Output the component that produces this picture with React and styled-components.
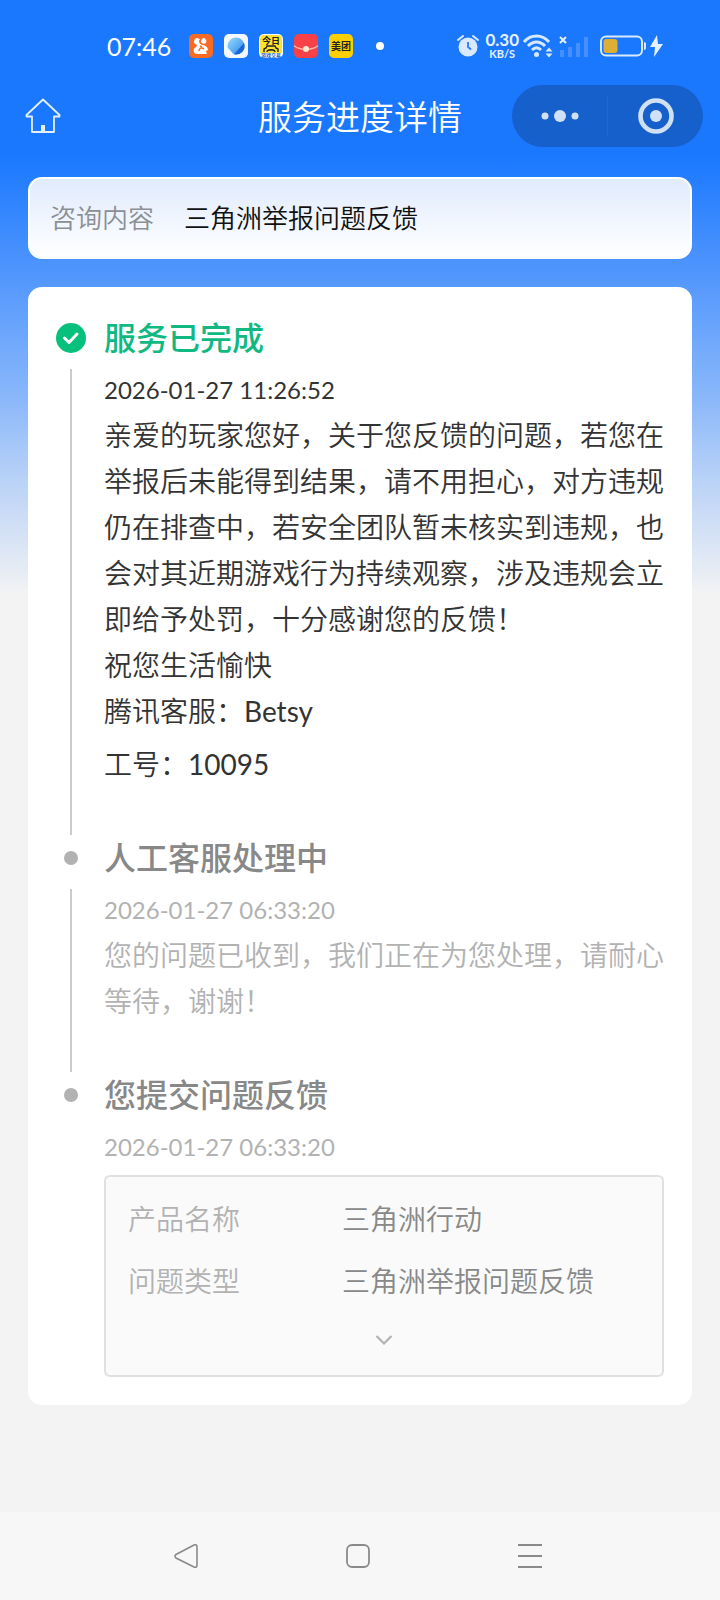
import { useState } from "react";
import styled, { createGlobalStyle } from "styled-components";

const steps = [
  {
    title: "服务已完成",
    time: "2026-01-27 11:26:52",
    done: true,
    lines: [
      "亲爱的玩家您好，关于您反馈的问题，若您在举报后未能得到结果，请不用担心，对方违规仍在排查中，若安全团队暂未核实到违规，也会对其近期游戏行为持续观察，涉及违规会立即给予处罚，十分感谢您的反馈！",
      "祝您生活愉快",
    ],
    agent: { name: "Betsy", id: "10095" },
  },
  {
    title: "人工客服处理中",
    time: "2026-01-27 06:33:20",
    lines: ["您的问题已收到，我们正在为您处理，请耐心等待，谢谢！"],
  },
  {
    title: "您提交问题反馈",
    time: "2026-01-27 06:33:20",
    lines: [],
    fields: [
      { label: "产品名称", value: "三角洲行动" },
      { label: "问题类型", value: "三角洲举报问题反馈" },
    ],
  },
];

function StatusBar() {
  return (
    <StatusWrapper>
      <Clock>07:46</Clock>
      <AppIcons>
        <svg width="24" height="24" viewBox="0 0 24 24">
          <rect width="24" height="24" rx="5" fill="#f96a22" />
          <path
            d="M5 8c0-2 1-4 3-4 1 0 1 1 3 1l-1 2c0 2 1 3 3 4 3 0 6 2 6 5l-2 1 1 3H8c-3 0-4-3-3-5 1-2 3-2 3-4-1-1-3-1-3-3z"
            fill="#fff"
          />
          <path d="M12 8c0-2 1-4 3-4 2 1 3 3 2 5-2 1-4 1-5-1z" fill="#fff" />
          <path d="M10 17c0-3 3-4 5-2M11 12l2 1" stroke="#f96a22" strokeWidth="1.5" fill="none" />
        </svg>
        <svg width="24" height="24" viewBox="0 0 24 24">
          <defs>
            <linearGradient id="drop" x1="0" y1="0" x2="1" y2="1">
              <stop offset="0" stopColor="#9adcfb" />
              <stop offset="1" stopColor="#2a86ee" />
            </linearGradient>
          </defs>
          <rect width="24" height="24" rx="5" fill="#f4f9ff" />
          <circle cx="12" cy="12" r="8.500" fill="url(#drop)" />
          <path d="M20 9L10 20.300A8.500 8.500 0 0 0 20 9z" fill="#1767d8" />
          <path d="M4 14l6 6.500-5 1z" fill="#f4f9ff" />
        </svg>
        <svg width="24" height="24" viewBox="0 0 24 24">
          <rect width="24" height="24" rx="5" fill="#fff" />
          <path d="M1 5a4 4 0 0 1 4-4h14a4 4 0 0 1 4 4v14H1z" fill="#ffe12f" />
          <IconText x="12" y="10" $size={9}>今日</IconText>
          <path
            d="M5 18v-3l2-1 1-2h8l1 2 2 1v3M8 18c0-3 8-3 8 0M10 16h4"
            fill="none"
            stroke="#222"
            strokeWidth="1.4"
          />
          <IconText x="12" y="23" $size={5} $color="#1566c8">游戏交易</IconText>
        </svg>
        <svg width="24" height="24" viewBox="0 0 24 24">
          <rect width="24" height="24" rx="5" fill="#fb4148" />
          <path d="M0 11c7 5 17 5 24 0v1.500c-7 5-17 5-24 0z" fill="#ffb7a5" />
          <circle cx="12" cy="15" r="3" fill="#ffe9cf" />
        </svg>
        <svg width="24" height="24" viewBox="0 0 24 24">
          <rect width="24" height="24" rx="5" fill="#fcd000" />
          <IconText x="12" y="16" $size={10}>美团</IconText>
        </svg>
      </AppIcons>
      <MoreDot />
      <SystemIcons>
        <svg width="24" height="24" viewBox="0 0 24 24" fill="none" stroke="#d9e9ff">
          <circle cx="11" cy="13" r="9.500" fill="#d9e9ff" stroke="none" />
          <path d="M1 6l5-4M21 6l-5-4" strokeWidth="2" strokeLinecap="round" />
          <path d="M11 8v5l3 2.500" stroke="#2a7cf5" strokeWidth="1.800" />
        </svg>
        <Speed>
          <SpeedValue>0.30</SpeedValue>
          <SpeedUnit>KB/S</SpeedUnit>
        </Speed>
        <svg width="32" height="24" viewBox="0 0 32 24" fill="none" stroke="#d9e9ff">
          <path d="M1 8c7-8 18-8 25 0" strokeWidth="3" />
          <path d="M5 12c5-5.500 12-5.500 17 0" strokeWidth="3" />
          <path d="M9 16c3-3 6-3 9 0" strokeWidth="3" />
          <circle cx="13.500" cy="20.500" r="2.500" fill="#d9e9ff" stroke="none" />
          <path d="M22.500 17.500h7L26 13.500zM22.500 19.500h7L26 23.500z" fill="#d9e9ff" stroke="none" />
        </svg>
        <svg width="37" height="24" viewBox="0 0 37 24">
          <path d="M1 3l6 6M7 3l-6 6" stroke="#e6f0ff" strokeWidth="2" />
          <path d="M1 16h4v7H1zM9 13h4v10H9zM17 9h4v14h-4zM25 3h4v20h-4z" fill="#4590fb" />
        </svg>
        <svg width="46" height="22" viewBox="0 0 46 22">
          <rect x="1" y="1.500" width="41" height="19" rx="5" fill="none" stroke="#d9e9ff" strokeWidth="2" />
          <rect x="3.500" y="4" width="14" height="14" rx="3" fill="#dfae35" />
          <path d="M44 7a2 2 0 0 1 2 2v4a2 2 0 0 1-2 2z" fill="#d9e9ff" />
        </svg>
        <svg width="13" height="22" viewBox="0 0 13 22">
          <path d="M7 0L0 12h5l-1 10L13 9H8z" fill="#e6f0ff" />
        </svg>
      </SystemIcons>
    </StatusWrapper>
  );
}

function NavBar() {
  return (
    <NavWrapper>
      <HomeButton aria-label="首页">
        <svg width="36" height="36" viewBox="0 0 36 36" fill="none" stroke="#e4efff" strokeWidth="1.800">
          <path d="M18 1.500L1.500 17v1.500H7V34h22V18.500h5.500V17z" strokeLinejoin="round" />
          <path d="M18 27v7" strokeWidth="4" />
        </svg>
      </HomeButton>
      <PageTitle>服务进度详情</PageTitle>
      <Capsule>
        <CapsuleButton aria-label="更多">
          <svg width="38" height="14" viewBox="0 0 38 14" fill="#d0e0f7">
            <circle cx="4" cy="7" r="3.500" />
            <circle cx="19" cy="7" r="6" />
            <circle cx="34" cy="7" r="3.500" />
          </svg>
        </CapsuleButton>
        <CapsuleButton aria-label="关闭">
          <svg width="36" height="36" viewBox="0 0 36 36">
            <circle cx="18" cy="18" r="15.500" fill="none" stroke="#d0e0f7" strokeWidth="4.600" />
            <circle cx="18" cy="18" r="6" fill="#d0e0f7" />
          </svg>
        </CapsuleButton>
      </Capsule>
    </NavWrapper>
  );
}

function FieldBox({ fields }) {
  const [open, setOpen] = useState(false);

  return (
    <FieldWrapper>
      <FieldList>
        {fields.map((field) => (
          <FieldRow key={field.label}>
            <dt>{field.label}</dt>
            <dd>{field.value}</dd>
          </FieldRow>
        ))}
      </FieldList>
      <ExpandButton
        aria-label="展开"
        aria-expanded={open}
        $open={open}
        onClick={() => setOpen(!open)}
      >
        <svg width="18" height="12" viewBox="0 0 18 12">
          <path d="M1.500 2L9 9.500 16.500 2" fill="none" stroke="#b2b2b2" strokeWidth="2.200" />
        </svg>
      </ExpandButton>
    </FieldWrapper>
  );
}

function Step({ step, last }) {
  return (
    <StepWrapper>
      <Rail>
        <Marker>
          {step.done ? (
            <svg width="30" height="30" viewBox="0 0 30 30">
              <circle cx="15" cy="15" r="15" fill="#07c07b" />
              <path
                d="M8.500 15l4.500 4.500 8-8.500"
                fill="none"
                stroke="#fff"
                strokeWidth="3"
                strokeLinecap="round"
                strokeLinejoin="round"
              />
            </svg>
          ) : (
            <Dot />
          )}
        </Marker>
        {!last && <Line />}
      </Rail>
      <StepBody $done={step.done} $last={last}>
        <StepTitle $done={step.done}>{step.title}</StepTitle>
        <Time dateTime={step.time}>{step.time}</Time>
        {step.lines.map((line) => (
          <Text key={line}>{line}</Text>
        ))}
        {step.agent && (
          <>
            <Text>
              腾讯客服：<Latin>{step.agent.name}</Latin>
            </Text>
            <Note>
              工号：<Latin>{step.agent.id}</Latin>
            </Note>
          </>
        )}
        {step.fields && <FieldBox fields={step.fields} />}
      </StepBody>
    </StepWrapper>
  );
}

function SystemNav() {
  return (
    <SystemNavWrapper>
      <IconButton aria-label="返回">
        <svg width="24" height="24" viewBox="0 0 24 24" fill="none" stroke="#8a8a8a" strokeWidth="1.600">
          <path d="M20 1Q23 0 23 3V21Q23 24 20 23L2 14Q0 12 2 10.500Z" />
        </svg>
      </IconButton>
      <IconButton aria-label="主屏幕">
        <svg width="24" height="24" viewBox="0 0 24 24" fill="none" stroke="#8a8a8a" strokeWidth="1.800">
          <rect x="1" y="1" width="22" height="22" rx="5" />
        </svg>
      </IconButton>
      <IconButton aria-label="最近任务">
        <svg width="24" height="24" viewBox="0 0 24 24" stroke="#8a8a8a" strokeWidth="2">
          <path d="M0 1h24M0 12h24M0 23h24" />
        </svg>
      </IconButton>
    </SystemNavWrapper>
  );
}

function App() {
  return (
    <Page>
      <GlobalStyle />
      <StatusBar />
      <NavBar />
      <Content>
        <TopicCard>
          <TopicLabel>咨询内容</TopicLabel>
          <span>三角洲举报问题反馈</span>
        </TopicCard>
        <ProgressCard>
          {steps.map((step, index) => (
            <Step key={step.title} step={step} last={index === steps.length - 1} />
          ))}
        </ProgressCard>
      </Content>
      <SystemNav />
    </Page>
  );
}

export default App;

const GlobalStyle = createGlobalStyle`
  * {
    box-sizing: border-box;
  }
  body {
    margin: 0;
    font-family: Lato, "Noto Sans CJK SC", sans-serif;
    font-weight: 350;
    background: #f3f3f3;
  }
  button {
    border: 0;
    padding: 0;
    background: none;
    cursor: pointer;
  }
  svg {
    display: block;
    flex: none;
  }
`;

const Page = styled.div`
  display: flex;
  flex-direction: column;
  min-height: 100vh;
  background: linear-gradient(
      180deg,
      #1a78ff 0,
      #1a78ff 155px,
      #4f95fd 270px,
      #8bb8fa 400px,
      #b9d2f7 480px,
      #f3f3f3 595px
    )
    no-repeat #f3f3f3;
`;

const StatusWrapper = styled.div`
  display: flex;
  align-items: center;
  height: 84px;
  padding: 8px 57px 0 107px;
  color: #fff;
`;

const Clock = styled.span`
  font-size: 25px;
  font-weight: 400;
  line-height: 32px;
`;

const AppIcons = styled.div`
  display: flex;
  gap: 11px;
  margin-left: 18px;
`;

const IconText = styled.text`
  font-family: "Noto Sans CJK SC", sans-serif;
  font-size: ${(props) => props.$size}px;
  font-weight: 700;
  text-anchor: middle;
  fill: ${(props) => props.$color || "#222"};
`;

const MoreDot = styled.span`
  width: 8px;
  height: 8px;
  margin-left: 23px;
  border-radius: 50%;
  background: #fff;
`;

const SystemIcons = styled.div`
  display: flex;
  align-items: center;
  gap: 4px;
  margin-left: auto;
`;

const Speed = styled.div`
  display: flex;
  flex-direction: column;
  align-items: center;
  font-weight: 700;
  color: #e6f0ff;
`;

const SpeedValue = styled.span`
  font-size: 17px;
  line-height: 15px;
`;

const SpeedUnit = styled.span`
  font-size: 11px;
  line-height: 13px;
`;

const NavWrapper = styled.header`
  display: grid;
  grid-template-columns: 1fr auto 1fr;
  align-items: center;
  height: 64px;
  padding: 0 17px;
`;

const IconButton = styled.button`
  display: flex;
  align-items: center;
  justify-content: center;
`;

const HomeButton = styled(IconButton)`
  justify-self: start;
  padding: 0 8px;
`;

const PageTitle = styled.h1`
  margin: 0;
  padding-top: 2px;
  font-size: 34px;
  font-weight: 350;
  line-height: 46px;
  color: #fff;
`;

const Capsule = styled.div`
  display: flex;
  align-items: center;
  justify-self: end;
  width: 191px;
  height: 62px;
  border-radius: 31px;
  background: #1560cb;
`;

const CapsuleButton = styled.button`
  display: flex;
  flex: 1;
  align-items: center;
  justify-content: center;
  height: 40px;

  & + & {
    border-left: 1px solid #2468ca;
  }
`;

const Content = styled.main`
  flex: 1;
  padding: 29px 28px;
`;

const TopicCard = styled.section`
  display: flex;
  gap: 30px;
  padding: 18px 20px;
  border: 2px solid #fff;
  border-radius: 14px;
  background: linear-gradient(180deg, #e0ebfd, #fff);
  font-size: 26px;
  line-height: 42px;
  color: #111;
`;

const TopicLabel = styled.span`
  color: #8c8f94;
`;

const ProgressCard = styled.section`
  margin-top: 28px;
  padding: 28px;
  border-radius: 14px;
  background: #fff;
`;

const StepWrapper = styled.article`
  display: flex;
`;

const Rail = styled.div`
  display: flex;
  flex: none;
  flex-direction: column;
  align-items: center;
  width: 30px;
  margin-right: 18px;
`;

const Marker = styled.div`
  display: flex;
  align-items: center;
  justify-content: center;
  height: 46px;
  margin-bottom: 8px;
`;

const Dot = styled.span`
  width: 14px;
  height: 14px;
  border-radius: 50%;
  background: #b2b2b2;
`;

const Line = styled.div`
  flex: 1;
  width: 2px;
  background: #ccc;
`;

const StepBody = styled.div`
  flex: 1;
  min-width: 0;
  padding-bottom: ${(props) => (props.$last ? 0 : 48)}px;
  color: ${(props) => (props.$done ? "#333" : "#b2b2b2")};
`;

const StepTitle = styled.h2`
  margin: 0 0 6px;
  font-size: 32px;
  font-weight: 500;
  line-height: 46px;
  color: ${(props) => (props.$done ? "#10b981" : "#888")};
`;

const Time = styled.time`
  display: block;
  font-size: 24px;
  font-weight: 400;
  line-height: 45px;
`;

const Text = styled.p`
  margin: 0;
  font-size: 28px;
  line-height: 46px;
`;

const Note = styled(Text)`
  margin-top: 7px;
`;

// Lato's light cut is too thin next to the CJK text
const Latin = styled.span`
  font-weight: 400;
`;

const FieldWrapper = styled.div`
  margin-top: 6px;
  padding: 19px 22px 0;
  border: 2px solid #e0e0e0;
  border-radius: 6px;
  background: #fafafa;
`;

const FieldList = styled.dl`
  display: flex;
  flex-direction: column;
  gap: 16px;
  margin: 0;
`;

const FieldRow = styled.div`
  display: grid;
  grid-template-columns: 214px 1fr;
  font-size: 28px;
  line-height: 46px;

  dd {
    margin: 0;
    color: #888;
  }
`;

const ExpandButton = styled.button`
  display: flex;
  align-items: center;
  justify-content: center;
  width: 100%;
  height: 71px;

  svg {
    transform: rotate(${(props) => (props.$open ? 180 : 0)}deg);
  }
`;

const SystemNavWrapper = styled.nav`
  display: flex;
  align-items: center;
  justify-content: center;
  gap: 148px;
  height: 88px;
  padding-right: 4px;
  background: #f7f7f7;
`;
